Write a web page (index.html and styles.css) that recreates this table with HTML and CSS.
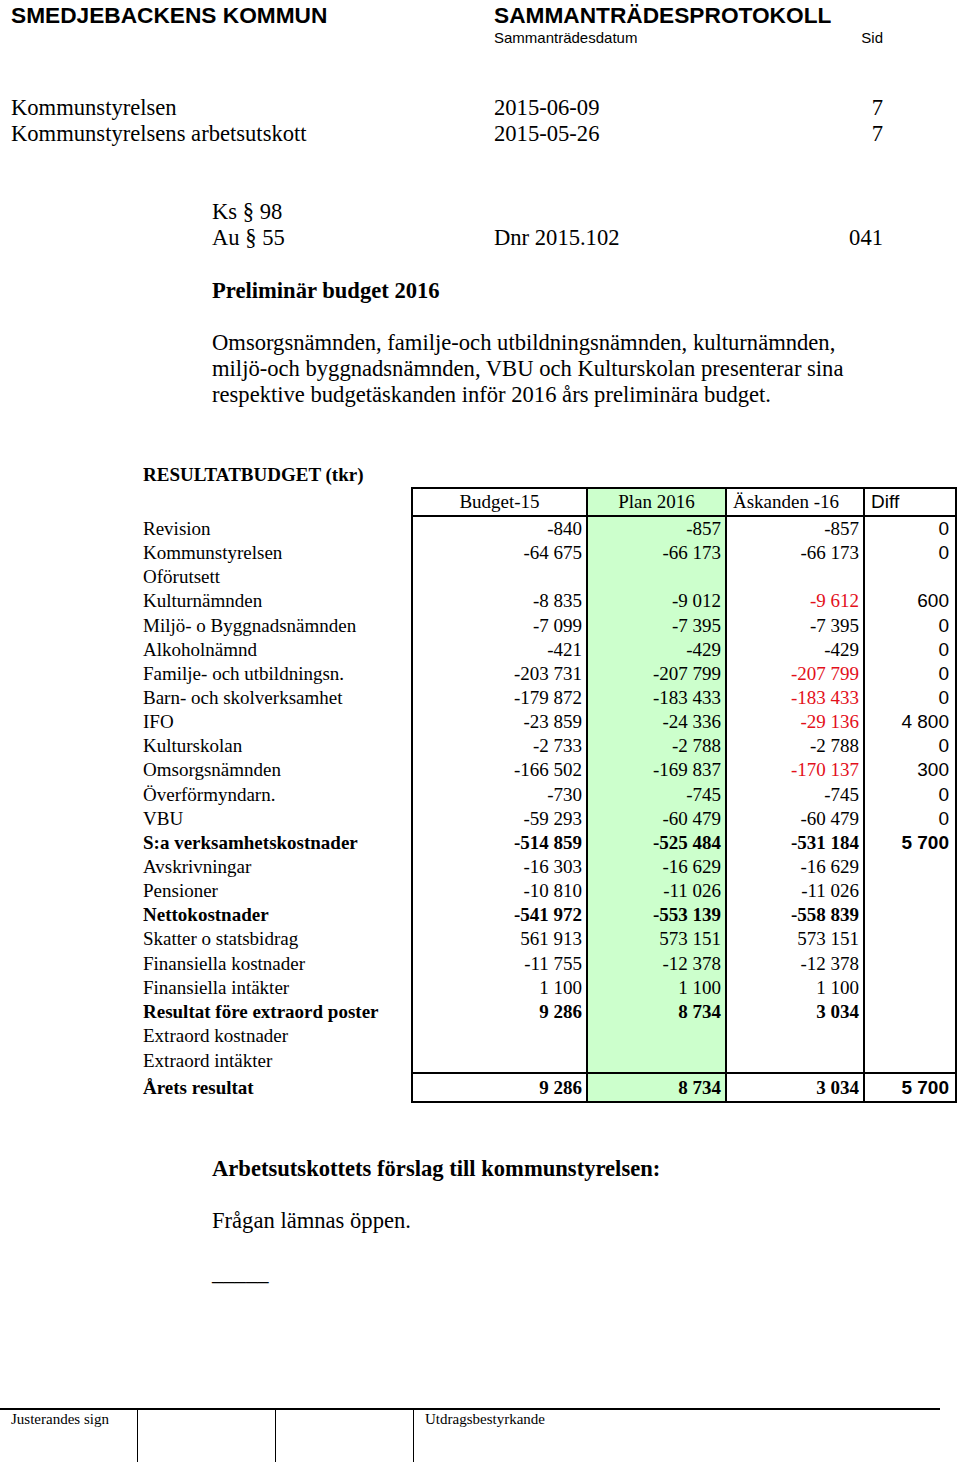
FILE: index.html
```html
<!DOCTYPE html>
<html lang="sv">
<head>
<meta charset="utf-8">
<title>Sammanträdesprotokoll</title>
<link rel="stylesheet" href="styles.css">
</head>
<body>
<div class="page">
  <header class="top">
    <div class="org">SMEDJEBACKENS KOMMUN</div>
    <div class="doctype">SAMMANTRÄDESPROTOKOLL</div>
    <div></div>
    <div class="small">Sammanträdesdatum</div>
    <div class="small right">Sid</div>
  </header>

  <section class="meta">
    <div>Kommunstyrelsen</div><div>2015-06-09</div><div class="right">7</div>
    <div>Kommunstyrelsens arbetsutskott</div><div>2015-05-26</div><div class="right">7</div>
  </section>

  <section class="para-ref">
    <div>Ks § 98</div><div></div><div></div>
    <div>Au § 55</div><div>Dnr 2015.102</div><div class="right">041</div>
  </section>

  <h1 class="heading">Preliminär budget 2016</h1>

  <p class="text">Omsorgsnämnden, familje-och utbildningsnämnden, kulturnämnden,<br>miljö-och byggnadsnämnden, VBU och Kulturskolan presenterar sina<br>respektive budgetäskanden inför 2016 års preliminära budget.</p>

  <div class="tabletitle">RESULTATBUDGET (tkr)</div>

  <table class="budget">
    <colgroup>
      <col class="c-label"><col class="c-b"><col class="c-p"><col class="c-a"><col class="c-d">
    </colgroup>
    <thead>
      <tr>
        <th class="lbl"></th>
        <th class="hc center">Budget-15</th>
        <th class="hc center plan">Plan 2016</th>
        <th class="hc left">Äskanden -16</th>
        <th class="hc left sans">Diff</th>
      </tr>
    </thead>
    <tbody>
      <tr><td class="lbl">Revision</td><td class="n">-840</td><td class="n plan">-857</td><td class="n">-857</td><td class="n d">0</td></tr>
      <tr><td class="lbl">Kommunstyrelsen</td><td class="n">-64 675</td><td class="n plan">-66 173</td><td class="n">-66 173</td><td class="n d">0</td></tr>
      <tr><td class="lbl">Oförutsett</td><td class="n"></td><td class="n plan"></td><td class="n"></td><td class="n d"></td></tr>
      <tr><td class="lbl">Kulturnämnden</td><td class="n">-8 835</td><td class="n plan">-9 012</td><td class="n red">-9 612</td><td class="n d">600</td></tr>
      <tr><td class="lbl">Miljö- o Byggnadsnämnden</td><td class="n">-7 099</td><td class="n plan">-7 395</td><td class="n">-7 395</td><td class="n d">0</td></tr>
      <tr><td class="lbl">Alkoholnämnd</td><td class="n">-421</td><td class="n plan">-429</td><td class="n">-429</td><td class="n d">0</td></tr>
      <tr><td class="lbl">Familje- och utbildningsn.</td><td class="n">-203 731</td><td class="n plan">-207 799</td><td class="n red">-207 799</td><td class="n d">0</td></tr>
      <tr><td class="lbl">Barn- och skolverksamhet</td><td class="n">-179 872</td><td class="n plan">-183 433</td><td class="n red">-183 433</td><td class="n d">0</td></tr>
      <tr><td class="lbl">IFO</td><td class="n">-23 859</td><td class="n plan">-24 336</td><td class="n red">-29 136</td><td class="n d">4 800</td></tr>
      <tr><td class="lbl">Kulturskolan</td><td class="n">-2 733</td><td class="n plan">-2 788</td><td class="n">-2 788</td><td class="n d">0</td></tr>
      <tr><td class="lbl">Omsorgsnämnden</td><td class="n">-166 502</td><td class="n plan">-169 837</td><td class="n red">-170 137</td><td class="n d">300</td></tr>
      <tr><td class="lbl">Överförmyndarn.</td><td class="n">-730</td><td class="n plan">-745</td><td class="n">-745</td><td class="n d">0</td></tr>
      <tr><td class="lbl">VBU</td><td class="n">-59 293</td><td class="n plan">-60 479</td><td class="n">-60 479</td><td class="n d">0</td></tr>
      <tr class="bold"><td class="lbl">S:a verksamhetskostnader</td><td class="n">-514 859</td><td class="n plan">-525 484</td><td class="n">-531 184</td><td class="n d">5 700</td></tr>
      <tr><td class="lbl">Avskrivningar</td><td class="n">-16 303</td><td class="n plan">-16 629</td><td class="n">-16 629</td><td class="n d"></td></tr>
      <tr><td class="lbl">Pensioner</td><td class="n">-10 810</td><td class="n plan">-11 026</td><td class="n">-11 026</td><td class="n d"></td></tr>
      <tr class="bold"><td class="lbl">Nettokostnader</td><td class="n">-541 972</td><td class="n plan">-553 139</td><td class="n">-558 839</td><td class="n d"></td></tr>
      <tr><td class="lbl">Skatter o statsbidrag</td><td class="n">561 913</td><td class="n plan">573 151</td><td class="n">573 151</td><td class="n d"></td></tr>
      <tr><td class="lbl">Finansiella kostnader</td><td class="n">-11 755</td><td class="n plan">-12 378</td><td class="n">-12 378</td><td class="n d"></td></tr>
      <tr><td class="lbl">Finansiella intäkter</td><td class="n">1 100</td><td class="n plan">1 100</td><td class="n">1 100</td><td class="n d"></td></tr>
      <tr class="bold"><td class="lbl">Resultat före extraord poster</td><td class="n">9 286</td><td class="n plan">8 734</td><td class="n">3 034</td><td class="n d"></td></tr>
      <tr><td class="lbl">Extraord kostnader</td><td class="n"></td><td class="n plan"></td><td class="n"></td><td class="n d"></td></tr>
      <tr><td class="lbl">Extraord intäkter</td><td class="n"></td><td class="n plan"></td><td class="n"></td><td class="n d"></td></tr>
    </tbody>
    <tfoot>
      <tr class="bold total"><td class="lbl">Årets resultat</td><td class="n">9 286</td><td class="n plan">8 734</td><td class="n">3 034</td><td class="n d">5 700</td></tr>
    </tfoot>
  </table>

  <h2 class="proposal">Arbetsutskottets förslag till kommunstyrelsen:</h2>
  <p class="text decision">Frågan lämnas öppen.</p>
  <p class="text rule">_____</p>

  <footer class="sign">
    <div class="cell">Justerandes sign</div>
    <div class="cell bl"></div>
    <div class="cell bl"></div>
    <div class="cell bl pad">Utdragsbestyrkande</div>
  </footer>
</div>
</body>
</html>
```

FILE: styles.css
```css
html, body {
  margin: 0;
  padding: 0;
  background: #fff;
}

.page {
  width: 960px;
  height: 1465px;
  display: flex;
  flex-direction: column;
  font-family: "Liberation Serif", "Times New Roman", serif;
  color: #000;
  overflow: hidden;
}

.right { text-align: right; }

/* Header */
.top {
  display: grid;
  grid-template-columns: 483px 1fr auto;
  width: 872px;
  padding-left: 11px;
  margin-top: 2px;
  font-family: "Liberation Sans", Arial, sans-serif;
}
.org, .doctype {
  font-weight: bold;
  font-size: 22.7px;
  line-height: 26px;
}
.doctype { grid-column: 2 / 4; }
.small {
  font-size: 15px;
  line-height: 19px;
}

/* Meta rows */
.meta {
  display: grid;
  grid-template-columns: 483px 1fr auto;
  width: 872px;
  padding-left: 11px;
  margin-top: 48px;
  font-size: 22.6px;
  line-height: 26px;
}

.para-ref {
  display: grid;
  grid-template-columns: 282px 1fr auto;
  width: 671px;
  padding-left: 212px;
  margin-top: 52px;
  font-size: 22.6px;
  line-height: 26px;
}

.heading {
  margin: 27px 0 0 212px;
  font-size: 22.6px;
  line-height: 26px;
  font-weight: bold;
}

.text {
  margin: 26px 0 0 212px;
  font-size: 22.6px;
  line-height: 26px;
}

.tabletitle {
  margin: 55px 0 0 143px;
  font-size: 19px;
  line-height: 24px;
  font-weight: bold;
}

/* Budget table */
.budget {
  margin-left: 143px;
  border-collapse: collapse;
  table-layout: fixed;
  width: 813px;
  font-size: 19px;
}
.c-label { width: 269px; }
.c-b { width: 175px; }
.c-p { width: 139px; }
.c-a { width: 138px; }
.c-d { width: 92px; }

.budget th, .budget td {
  padding: 0;
  white-space: nowrap;
}
.budget th {
  font-weight: normal;
  height: 26px;
  line-height: 26px;
}
.budget .hc {
  border: 2px solid #000;
}
.budget .center { text-align: center; }
.budget .left { text-align: left; padding-left: 6px; }
.budget .sans { font-family: "Liberation Sans", Arial, sans-serif; }

.budget td {
  height: 24.15px;
  line-height: 24px;
}
.budget .lbl { text-align: left; }
.budget .n {
  text-align: right;
  padding-right: 4px;
  border-left: 2px solid #000;
  border-right: 2px solid #000;
}
.budget .d {
  font-family: "Liberation Sans", Arial, sans-serif;
  padding-right: 6px;
}
.budget .plan { background: #ccffcc; }
.budget .red { color: #e3101a; }
.budget .bold td { font-weight: bold; }
.budget .total td { height: 26px; line-height: 27px; }
.budget .total .n {
  border-top: 2px solid #000;
  border-bottom: 2px solid #000;
}

/* Proposal */
.proposal {
  margin: 53px 0 0 212px;
  font-size: 22.6px;
  line-height: 26px;
  font-weight: bold;
}
.decision { margin-top: 26px; }
.rule { margin-top: 26px; }

/* Signature footer */
.sign {
  margin-top: auto;
  margin-bottom: 3px;
  width: 940px;
  height: 52px;
  border-top: 2px solid #000;
  display: grid;
  grid-template-columns: 137px 138px 138px 1fr;
  font-size: 15px;
  line-height: 18px;
}
.sign .cell {
  padding: 0 0 0 11px;
}
.sign .bl { border-left: 1px solid #000; }
```
